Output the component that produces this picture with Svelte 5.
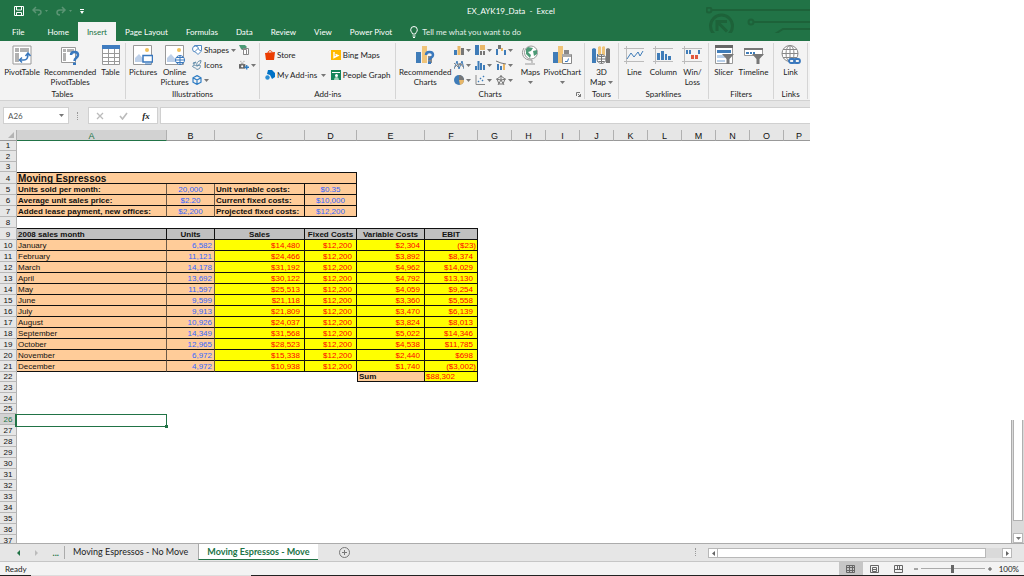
<script lang="ts">
  type Cell = { v?: string; c?: string; span?: number };
  type Row = { n: number; h: number; cells: Cell[] };

  const letters = "ABCDEFGHIJKLMNOP".split("");
  const colWidths = [17, 150, 48, 90, 52, 68, 53, 34, 34, 34, 34, 34, 34, 34, 34, 34, 26];

  const months = [
    ["January", "6,582", "$14,480", "$12,200", "$2,304", "($23)"],
    ["February", "11,121", "$24,466", "$12,200", "$3,892", "$8,374"],
    ["March", "14,178", "$31,192", "$12,200", "$4,962", "$14,029"],
    ["April", "13,692", "$30,122", "$12,200", "$4,792", "$13,130"],
    ["May", "11,597", "$25,513", "$12,200", "$4,059", "$9,254"],
    ["June", "9,599", "$21,118", "$12,200", "$3,360", "$5,558"],
    ["July", "9,913", "$21,809", "$12,200", "$3,470", "$6,139"],
    ["August", "10,926", "$24,037", "$12,200", "$3,824", "$8,013"],
    ["September", "14,349", "$31,568", "$12,200", "$5,022", "$14,346"],
    ["October", "12,965", "$28,523", "$12,200", "$4,538", "$11,785"],
    ["November", "6,972", "$15,338", "$12,200", "$2,440", "$698"],
    ["December", "4,972", "$10,938", "$12,200", "$1,740", "($3,002)"],
  ];

  const inputs = [
    ["Units sold per month:", "20,000", "Unit variable costs:", "$0.35"],
    ["Average unit sales price:", "$2.20", "Current fixed costs:", "$10,000"],
    ["Added lease payment, new offices:", "$2,200", "Projected fixed costs:", "$12,200"],
  ];

  // rows that are a pixel shorter or taller than the default 11
  const heights: Record<number, number> = { 1: 10, 3: 10, 4: 12, 9: 12, 22: 10, 25: 10 };

  const cellsFor = (n: number): Cell[] => {
    if (n === 4) return [{ v: "Moving Espressos", c: "peach heading top", span: 4 }];
    if (n >= 5 && n <= 7) {
      const [a, b, c, d] = inputs[n - 5];
      return [
        { v: a, c: "peach bold soft" },
        { v: b, c: "peach blue center soft" },
        { v: c, c: "peach bold" },
        { v: d, c: "peach blue center" },
      ];
    }
    if (n === 9) {
      return ["2008 sales month", "Units", "Sales", "Fixed Costs", "Variable Costs", "EBIT"].map(
        (v, i) => ({ v, c: "grey bold top" + (i ? " center" : "") })
      );
    }
    if (n >= 10 && n <= 21) {
      return months[n - 10].map((v, i) => {
        if (i === 0) return { v, c: "peach soft" };
        if (i === 1) return { v, c: "peach blue right soft" };
        return { v, c: "yellow money" + (v.startsWith("(") ? " neg" : "") };
      });
    }
    if (n === 22) {
      return [{ span: 4 }, { v: "Sum", c: "peach bold left-edge" }, { v: "$88,302", c: "yellow" }];
    }
    if (n === 26) return [{ c: "selected" }];
    return [];
  };

  const rows: Row[] = Array.from({ length: 37 }, (_, i) => ({
    n: i + 1,
    h: heights[i + 1] ?? 11,
    cells: cellsFor(i + 1),
  }));

  const tabs = ["File", "Home", "Insert", "Page Layout", "Formulas", "Data", "Review", "View", "Power Pivot"];
  const miniCharts = ["column", "tree", "waterfall", "stock", "histogram", "combo", "pie", "scatter", "radar"];

  let zoom = 50;
</script>

{#snippet caret()}
  <svg class="caret" viewBox="0 0 5 3"><path d="M0 0h5L2.500 3z" fill="#777" /></svg>
{/snippet}

{#snippet photo()}
  <path d="M.5.5h18v19H.5z" fill="#fff" stroke="#999" />
  <path d="M2 17v-4l4-4 7 8z" fill="#bdd0e9" />
  <circle cx="14" cy="5" r="2" fill="#f0c05a" />
{/snippet}

<div class="app">
  <header>
    <div class="titlebar">
      <div class="quick">
        <button aria-label="Save">
          <svg width="10" height="10" viewBox="0 0 10 10"><path d="M.5.5h9v9h-9zM2.500.5v3.500h5V.5M2.500 9.500V6.500h5v3" fill="none" stroke="#fff" /></svg>
        </button>
        <button aria-label="Undo">
          <svg width="16" height="10" viewBox="0 0 16 10"><path d="M4 1L1 4l3 3M1 4h5c4 0 4 4 0 5" fill="none" stroke="#5b9574" stroke-width="1.500" /><path d="M13 4h3l-1.500 2z" fill="#5b9574" /></svg>
        </button>
        <button aria-label="Redo">
          <svg width="16" height="10" viewBox="0 0 16 10"><path d="M6 1l3 3-3 3M9 4H4C0 4 0 9 4 9" fill="none" stroke="#5b9574" stroke-width="1.500" /><path d="M13 4h3l-1.500 2z" fill="#5b9574" /></svg>
        </button>
        <button aria-label="Customize Quick Access Toolbar">
          <svg width="4" height="5" viewBox="0 0 4 5"><path d="M0 .5h4" stroke="#fff" /><path d="M0 2h4L2 5z" fill="#fff" /></svg>
        </button>
      </div>
      <h1>EX_AYK19_Data&nbsp; - &nbsp;Excel</h1>
      <div class="rest"></div>
    </div>
    <nav>
      {#each tabs as tab}
        <button class="tab" class:file={tab === "File"} class:active={tab === "Insert"}>{tab}</button>
      {/each}
      <button class="tab tell">
        <svg width="8" height="12" viewBox="0 0 8 12"><path d="M2.500 8C2.500 6.500.7 6 .7 3.800a3.300 3.300 0 0 1 6.600 0C7.300 6 5.500 6.500 5.500 8zM2.500 10h3M3 11.500h2" fill="none" stroke="#fff" /></svg>
        Tell me what you want to do
      </button>
    </nav>
    <svg class="circuit" width="104" height="26" viewBox="0 0 104 26" fill="none" stroke="#1d6239" stroke-width="2">
      <circle cx="3" cy="3" r="2.500" /><path d="M6 3h98" />
      <circle cx="45" cy="15" r="2.500" /><path d="M48 15h56" />
      <circle cx="15.500" cy="19" r="11" stroke-width="3" />
      <path d="M11 24V14.500h10M11 14.500l10 10" stroke-width="3" />
      <path d="M69 27l8-5h27" />
    </svg>
  </header>

  <section class="ribbon">
    <div class="group tables">
      <div class="tools">
        <button class="big">
          <svg viewBox="0 0 20 20"><path d="M1 1h18v18H1z" fill="#fff" stroke="#999" /><path d="M3 3h4v4H3zM8 3h9v4H8zM3 8h4v9H3z" fill="#b1b1b1" /><path d="M8 15h4c3 0 4-2 4-6M10 12.500L7.500 15l2.500 2.500M13.500 11L16 8l2.500 3" fill="none" stroke="#3a78bd" stroke-width="1.500" /></svg>
          PivotTable
        </button>
        <button class="big">
          <svg viewBox="0 0 20 20"><path d="M1.500 2.500h14v15h-14z" fill="#fff" stroke="#999" /><path d="M3 4h3v3H3zM7 4h7v3H7zM3 8h3v8H3z" fill="#b1b1b1" /><path d="M11 10c0-4 7-4 7 0 0 3-3.500 2.500-3.500 6" fill="none" stroke="#3a78bd" stroke-width="2.500" /><path d="M13 17.500h3V20h-3z" fill="#3a78bd" /></svg>
          Recommended<br />PivotTables
        </button>
        <button class="big">
          <svg viewBox="0 0 20 20"><path d="M1 1h18v18H1z" fill="#fff" /><path d="M1 0h18v4H1z" fill="#3f7cc0" /><path d="M1.500 4v15.500h17V4M1 8.500h18M1 12.500h18M1 16.500h18M7.500 4v15M13.500 4v15" fill="none" stroke="#999" /></svg>
          Table
        </button>
      </div>
      <span class="name">Tables</span>
    </div>

    <div class="group illus">
      <div class="tools">
        <button class="big">
          <svg viewBox="0 0 20 20">{@render photo()}<path d="M10 10.500h9.500v6.500H10z" fill="#fff" stroke="#3a78bd" stroke-width="1.500" /><path d="M12 19h6" stroke="#3a78bd" /></svg>
          Pictures
        </button>
        <button class="big">
          <svg viewBox="0 0 20 20">{@render photo()}<g fill="none" stroke="#3a78bd"><circle cx="15" cy="15" r="4.500" fill="#fff" /><path d="M10.500 15h9M15 10.500v9M11.500 12.500h7M11.500 17.500h7" /></g></svg>
          Online<br />Pictures
        </button>
        <div class="stack three">
          <button class="small">
            <svg viewBox="0 0 10 10" fill="#fff" stroke="#5288c1"><path d="M2.500.5h7v5h-7z" /><circle cx="3.500" cy="4" r="3" /><path d="M6 3.500L9 6.500 6 9.500 3 6.500z" /></svg>
            Shapes{@render caret()}
          </button>
          <button class="small">
            <svg viewBox="0 0 10 10" fill="none" stroke="#6790ad"><path d="M5 9.500C8 9 9 7 8 5L5 6c-2-1-4-1-4.500 0C1 8 3 7 5 9.500M5 6c-1-3 1-5 4-5.500 0 2-1 4-4 5.500M2 4.500L1 3l3-1z" /></svg>
            Icons
          </button>
          <button class="small" aria-label="3D Models">
            <svg viewBox="0 0 10 10" fill="none" stroke="#2f7dc4" stroke-width="1.200"><path d="M5 .6l4 2.200v4.400L5 9.400 1 7.200V2.800zM1 2.800l4 2.200 4-2.200M5 5v4.400" /></svg>
            {@render caret()}
          </button>
        </div>
        <div class="stack three">
          <button class="small" aria-label="SmartArt">
            <svg viewBox="0 0 10 10"><path d="M0 0h6l2 2-2 2H2z" fill="#4c9a76" /><path d="M2.500 4.500h5v5h-3M4.500 3.500h5v6h-5z" fill="#fff" stroke="#888" /></svg>
          </button>
          <button class="small" aria-label="Screenshot">
            <svg viewBox="0 0 11 10"><path d="M0 4h7v5H0z" fill="#666" /><circle cx="3.500" cy="6.500" r="1.200" fill="#fff" /><path d="M2 3h3M1.500 1h1M5 1h1" stroke="#888" /><path d="M8.500 5v5M6 7.500h5" stroke="#2f7dc4" stroke-width="1.500" /></svg>
            {@render caret()}
          </button>
        </div>
      </div>
      <span class="name">Illustrations</span>
    </div>

    <div class="group addins">
      <div class="tools">
        <div class="stack two">
          <button class="small">
            <svg viewBox="0 0 10 10"><path d="M0 3l10-1-1 8H1z" fill="#eb3c00" /><path d="M3 3c0-3 4-3 4-.5" fill="none" stroke="#eb3c00" /></svg>
            Store
          </button>
          <button class="small">
            <svg viewBox="0 0 10 10"><path d="M3 0h4l3 3v4L7 9 5 5 2 4z" fill="#0072c6" /><circle cx="2.500" cy="7.500" r="2.200" fill="#2a8dd4" /></svg>
            My Add-ins <span></span>{@render caret()}
          </button>
        </div>
        <div class="stack two">
          <button class="small">
            <svg viewBox="0 0 10 10"><path d="M0 0h10v10H0z" fill="#ffb900" /><path d="M3 2v5.500l4-2-2.500-1.200" fill="none" stroke="#fff" stroke-width="1.400" /></svg>
            Bing Maps
          </button>
          <button class="small">
            <svg viewBox="0 0 10 10"><path d="M0 0h10v10H0z" fill="#13855a" /><path d="M1 2.500h8" stroke="#fff" /><circle cx="5.500" cy="5.500" r="1.500" fill="#fff" /><path d="M3 10c0-4 5-4 5 0z" fill="#9fd4bb" /></svg>
            People Graph
          </button>
        </div>
      </div>
      <span class="name">Add-ins</span>
    </div>

    <div class="group charts">
      <div class="tools">
        <button class="big">
          <svg viewBox="0 0 20 20"><path d="M1 7h5v11H1z" fill="#3f7cb8" /><path d="M7 1h5v17H7z" fill="#f0c479" /><path d="M13 11h4v7h-4z" fill="#888" /><path d="M11 10c0-4 7-4 7 0 0 3-3.500 2.500-3.500 5" fill="none" stroke="#3a78bd" stroke-width="2.500" /><path d="M13 16.500h3V19h-3z" fill="#3a78bd" /></svg>
          Recommended<br />Charts
        </button>
        <div class="minis">
          {#each miniCharts as kind}
            <button class="small" aria-label={kind}>
              <svg viewBox="0 0 10 10">
                {#if kind === "column"}
                  <path d="M0 5h3v5H0z" fill="#3f7cb8" /><path d="M3.500 1h3v9h-3z" fill="#e8b768" /><path d="M7 3h3v7H7z" fill="#777" />
                {:else if kind === "tree"}
                  <path d="M0 0h4v10H0z" fill="#3f7cb8" /><path d="M5 0h5v5H5z" fill="#e8b768" /><path d="M5 6h2v4H5zM8 6h2v4H8z" fill="#777" />
                {:else if kind === "waterfall"}
                  <path d="M0 4h2v6H0z" fill="#3f7cb8" /><path d="M2 0h3v4H2z" fill="#777" /><path d="M5 3h2v3H5z" fill="#e8b768" /><path d="M8 5h2v5H8z" fill="#3f7cb8" />
                {:else if kind === "stock"}
                  <path d="M0 9l3-8 2 8 3-8 2 8" fill="none" stroke="#3f7cb8" /><path d="M0 3l4 4 2-4 4 5M0 8l4-4 5 1" fill="none" stroke="#888" />
                {:else if kind === "histogram"}
                  <path d="M0 6h2v4H0zM2.500 1h2v9h-2zM5 3h2v7H5zM8 5h2v5H8z" fill="#3f7cb8" />
                {:else if kind === "combo"}
                  <path d="M1 4h2v6H1zM4 6h2v4H4z" fill="#3f7cb8" /><path d="M7 4h2v6H7z" fill="#e8b768" /><path d="M0 1l5 2 5 1" fill="none" stroke="#777" />
                {:else if kind === "pie"}
                  <circle cx="5" cy="5" r="5" fill="#3f7cb8" /><path d="M5 5V0a5 5 0 0 1 5 5z" fill="#777" /><path d="M5 5h5a5 5 0 0 1-4 4.900z" fill="#e8b768" />
                {:else if kind === "scatter"}
                  <path d="M1 0v9.500h9" fill="none" stroke="#888" /><path d="M3 6h1v1H3zM5 3h1v1H5zM7 5h1v1H7zM8 1h1v1H8z" fill="#3f7cb8" stroke="#3f7cb8" stroke-width=".5" />
                {:else}
                  <path d="M5 0v5L0 4M5 5l5-1M5 5l-3 5M5 5l3 5M5 1l4 3-2 5H3L1 4z" fill="none" stroke="#777" />
                {/if}
              </svg>
              {@render caret()}
            </button>
          {/each}
        </div>
        <button class="big">
          <svg viewBox="0 0 20 20"><path d="M4 3C0 9 4 16 12 15M12 15v3M5 19h10" fill="none" stroke="#999" /><circle cx="11" cy="7.500" r="6.500" fill="#fff" stroke="#999" /><path d="M8 2l5 1-2 3-3 1 3 3-1 3-4-4V4zM13 6l4-1v4l-3 2z" fill="#4c9a76" /></svg>
          Maps<br />{@render caret()}
        </button>
        <button class="big">
          <svg viewBox="0 0 20 20"><path d="M1 7h5v11H1z" fill="#3f7cb8" /><path d="M6 1h5v17H6z" fill="#f0c479" /><path d="M12 5h5v6h-5z" fill="#888" /><path d="M10.500 9.500h9v9h-9z" fill="#fff" stroke="#888" /><path d="M10 9h9v3h-9z" fill="#aaa" /><path d="M13 16.500h2.500l1-3" fill="none" stroke="#3a78bd" /></svg>
          PivotChart<br />{@render caret()}
        </button>
      </div>
      <span class="name">Charts</span>
      <button class="launcher" aria-label="Chart options"><svg width="5" height="5" viewBox="0 0 5 5"><path d="M.5 4V.5H4M2 2l2.500 2.500M4.500 2v2.500H2" fill="none" stroke="#777" /></svg></button>
    </div>

    <div class="group tours">
      <div class="tools">
        <button class="big">
          <svg viewBox="0 0 20 20"><path d="M1 4l2-1 2 1v14H1zM6 9h2v8H6z" fill="#3f7cb8" /><path d="M7 2l2-1 1 1v8H7zM11 2l2-1 1 1v8h-3z" fill="#f0c479" /><path d="M15 4l2-1 2 1v14h-4z" fill="#777" /><g fill="none" stroke="#777"><circle cx="10.500" cy="14" r="4.500" fill="#fff" /><path d="M6 14h9M10.500 9.500v9M7.500 11.500h6M7.500 16.500h6" /></g></svg>
          3D<br />Map {@render caret()}
        </button>
      </div>
      <span class="name">Tours</span>
    </div>

    <div class="group spark">
      <div class="tools">
        <button class="big">
          <svg viewBox="0 0 20 20"><path d="M0 3.500h20M0 16.500h20M2.500 1v18" stroke="#bbb" /><path d="M3 14l4-6 3 4 4-5 2 4 3-5" fill="none" stroke="#3f7cb8" /></svg>
          Line
        </button>
        <button class="big">
          <svg viewBox="0 0 20 20"><path d="M0 3.500h20M0 16.500h20M2.500 1v18" stroke="#bbb" /><path d="M4 8h3v7H4zM8 6h3v9H8zM12 9h2v6h-2zM15 11h3v4h-3z" fill="#3f7cb8" /></svg>
          Column
        </button>
        <button class="big">
          <svg viewBox="0 0 20 20"><path d="M0 3.500h20M0 16.500h20M2.500 1v18" stroke="#bbb" /><path d="M4 5h2v4H4zM7 5h2v4H7zM16 5h2v4h-2z" fill="#3f7cb8" /><path d="M9 10h3v4H9zM13 10h3v4h-3z" fill="#e0573e" /></svg>
          Win/<br />Loss
        </button>
      </div>
      <span class="name">Sparklines</span>
    </div>

    <div class="group filters">
      <div class="tools">
        <button class="big">
          <svg viewBox="0 0 20 20"><path d="M1.500.5h17v18h-17z" fill="#fff" stroke="#999" /><path d="M1 0h18v3H1z" fill="#666" /><path d="M3 5h14v3H3z" fill="#3f7cb8" /><path d="M3 10h8v3H3zM3 15h8v2H3z" fill="#b8cfe8" /><path d="M8 9h12l-4.500 5v5h-3v-5z" fill="#777" /></svg>
          Slicer
        </button>
        <button class="big">
          <svg viewBox="0 0 20 20"><path d="M.5 3.500h18v7H.5z" fill="#fff" stroke="#999" /><path d="M0 3h19v2H0z" fill="#777" /><path d="M2 7h3v2H2zM6 7h2v2H6zM9 7h2v2H9z" fill="#3f7cb8" /><path d="M8 9h12l-4.500 5v5h-3v-5z" fill="#777" /></svg>
          Timeline
        </button>
      </div>
      <span class="name">Filters</span>
    </div>

    <div class="group links">
      <div class="tools">
        <button class="big">
          <svg viewBox="0 0 20 20" fill="none"><g stroke="#888"><circle cx="9" cy="8.500" r="8" fill="#fff" /><ellipse cx="9" cy="8.500" rx="4" ry="8" /><path d="M1 8.500h16M9 .5v16M2 4.500h14M2 12.500h14" /></g><g stroke="#3a78bd" stroke-width="1.800"><rect x="8" y="14" width="6" height="4" rx="2" fill="#f3f3f3" /><rect x="13" y="14" width="6" height="4" rx="2" /></g></svg>
          Link
        </button>
      </div>
      <span class="name">Links</span>
    </div>
  </section>

  <div class="formula-bar">
    <div class="name-box">
      <input value="A26" aria-label="Name box" />
      <button aria-label="Names">{@render caret()}</button>
    </div>
    <span class="grip"></span>
    <div class="fx">
      <button aria-label="Cancel"><svg width="8" height="8" viewBox="0 0 8 8"><path d="M1 1l6 6M7 1L1 7" stroke="#bbb" stroke-width="1.300" /></svg></button>
      <button aria-label="Enter"><svg width="9" height="8" viewBox="0 0 9 8"><path d="M1 4l2.500 3L8 1" fill="none" stroke="#bbb" stroke-width="1.600" /></svg></button>
      <button class="fn">fx</button>
    </div>
    <input class="formula" aria-label="Formula" />
  </div>

  <main>
    <div class="sheet">
      <table>
        <colgroup>
          {#each colWidths as w}<col style="width: {w}px" />{/each}
        </colgroup>
        <thead>
          <tr>
            <th class="corner"><svg width="6" height="6" viewBox="0 0 6 6"><path d="M6 0v6H0z" fill="#b4b4b4" /></svg></th>
            {#each letters as letter}
              <th class:current={letter === "A"}>{letter}</th>
            {/each}
          </tr>
        </thead>
        <tbody>
          {#each rows as row}
            <tr style="height: {row.h}px">
              <th class:current={row.n === 26}>{row.n}</th>
              {#each row.cells as cell}
                <td class={cell.c ?? ""} colspan={cell.span ?? 1}>{cell.v ?? ""}</td>
              {/each}
            </tr>
          {/each}
        </tbody>
      </table>
    </div>
    <div class="vscroll">
      <div class="thumb"></div>
      <button aria-label="Scroll down">{@render caret()}</button>
    </div>
  </main>

  <div class="sheet-tabs">
    <div class="steps">
      <button aria-label="Previous sheet"><svg width="3" height="6" viewBox="0 0 3 6"><path d="M3 0v6L0 3z" fill="#217346" /></svg></button>
      <button aria-label="Next sheet"><svg width="3" height="6" viewBox="0 0 3 6"><path d="M0 0v6l3-3z" fill="#bbb" /></svg></button>
      <button class="more">...</button>
    </div>
    <button class="sheet-tab">Moving Espressos - No Move</button>
    <button class="sheet-tab active">Moving Espressos - Move</button>
    <button class="add" aria-label="New sheet"><svg width="11" height="11" viewBox="0 0 11 11"><circle cx="5.500" cy="5.500" r="5" fill="none" stroke="#777" /><path d="M5.500 3v5M3 5.500h5" stroke="#777" /></svg></button>
    <span class="grip"></span>
    <div class="hscroll">
      <button aria-label="Scroll left"><svg width="3" height="5" viewBox="0 0 3 5"><path d="M3 0v5L0 2.500z" fill="#666" /></svg></button>
      <div class="thumb"></div>
      <button aria-label="Scroll right"><svg width="3" height="5" viewBox="0 0 3 5"><path d="M0 0v5l3-2.500z" fill="#666" /></svg></button>
    </div>
  </div>

  <footer>
    <span class="ready">Ready</span>
    <button class="view on" aria-label="Normal"><svg width="9" height="8" viewBox="0 0 9 8"><path d="M.5.5h8v7h-8zM.5 2.500h8M.5 5.500h8M3.500.5v7M6.500.5v7" fill="none" stroke="#666" /></svg></button>
    <button class="view" aria-label="Page Layout"><svg width="9" height="8" viewBox="0 0 9 8"><path d="M.5.5h8v7h-8zM2.500 2.500h4v4h-4zM3 4.500h3" fill="none" stroke="#666" /></svg></button>
    <button class="view" aria-label="Page Break Preview"><svg width="9" height="8" viewBox="0 0 9 8"><path d="M.5.5h8v7h-8zM.5 4.500h8M3.500.5v4M5.500.5v4" fill="none" stroke="#666" /></svg></button>
    <button class="step" aria-label="Zoom out"><svg width="4" height="4" viewBox="0 0 4 4"><path d="M0 2h4" stroke="#555" /></svg></button>
    <input type="range" bind:value={zoom} aria-label="Zoom" />
    <button class="step" aria-label="Zoom in"><svg width="4" height="4" viewBox="0 0 4 4"><path d="M0 2h4M2 0v4" stroke="#555" /></svg></button>
    <button class="percent">100%</button>
  </footer>
  <div class="edge"></div>
</div>

<style>
  :global(body) {
    margin: 0;
    background: #fff;
  }

  .app {
    height: 100vh;
    display: flex;
    flex-direction: column;
    overflow: hidden;
    font: 8px/10px Lato, "Open Sans", sans-serif;
    color: #222;
  }

  button,
  input {
    margin: 0;
    padding: 0;
    border: 0;
    background: none;
    font: inherit;
    color: inherit;
  }

  button {
    display: flex;
    align-items: center;
    justify-content: center;
    white-space: nowrap;
  }

  svg {
    display: block;
    flex: none;
  }

  .caret {
    display: inline-block;
    width: 5px;
    height: 3px;
    vertical-align: middle;
  }

  header,
  .ribbon,
  .formula-bar {
    box-sizing: border-box;
    width: 79.1%;
    flex: none;
  }

  header {
    position: relative;
    background: #217346;
    color: #fff;
  }

  .titlebar {
    height: 22px;
    display: flex;
    align-items: center;
  }

  .quick {
    flex: 458;
    box-sizing: border-box;
    padding-left: 14px;
    display: flex;
    align-items: center;
    gap: 8px;
  }

  h1 {
    margin: 0;
    font-size: 8px;
    font-weight: 400;
    white-space: nowrap;
  }

  .rest {
    flex: 258;
  }

  nav {
    display: flex;
    height: 19px;
  }

  .tab {
    padding: 0 9px;
  }

  .tab.file {
    padding: 0 14px 0 12px;
  }

  .tab.active {
    background: #f3f3f3;
    color: #217346;
  }

  .tell {
    gap: 4px;
    color: #e4efe8;
  }

  .circuit {
    position: absolute;
    right: 0;
    top: 7px;
  }

  .ribbon {
    display: flex;
    height: 60px;
    padding: 2px 2px 1px 0;
    background: #f3f3f3;
    border-bottom: 1px solid #d2d2d2;
  }

  .group {
    position: relative;
    box-sizing: border-box;
    min-width: 0;
    display: flex;
    flex-direction: column;
    border-right: 1px solid #d5d5d5;
  }

  .tables { flex: 126 0 0; }
  .illus { flex: 135 0 0; }
  .addins { flex: 136 0 0; }
  .charts { flex: 190 0 0; }
  .tours { flex: 33 0 0; }
  .spark { flex: 90 0 0; }
  .filters { flex: 65 0 0; }
  .links { flex: 33 0 0; }

  .tools {
    flex: 1;
    display: flex;
    align-items: flex-start;
    justify-content: space-evenly;
    padding-top: 2px;
  }

  .name {
    text-align: center;
  }

  .big {
    display: block;
    text-align: center;
  }

  .big > svg:first-child {
    width: 20px;
    height: 20px;
    margin: 0 auto 2px;
  }

  .stack {
    display: flex;
    flex-direction: column;
    align-items: flex-start;
  }

  .three {
    gap: 5px;
  }

  .two {
    gap: 10px;
    padding-top: 5px;
  }

  .small {
    height: 10px;
    gap: 2px;
  }

  .small > svg:first-child {
    width: 10px;
    height: 10px;
  }

  .minis {
    display: grid;
    grid-template-columns: repeat(3, 21px);
    gap: 5px 0;
    justify-items: start;
  }

  .launcher {
    position: absolute;
    right: 3px;
    bottom: 2px;
  }

  .formula-bar {
    display: flex;
    height: 29px;
    padding: 6px 0;
    background: #e6e6e6;
  }

  .name-box {
    display: flex;
    box-sizing: border-box;
    width: 66px;
    margin-left: 3px;
    padding: 0 4px;
    border: 1px solid #d0d0d0;
    background: #fff;
    color: #555;
  }

  .name-box input {
    flex: 1;
    min-width: 0;
  }

  .grip {
    width: 2px;
    height: 8px;
    margin: auto 8px;
    border-left: 1px dotted #999;
  }

  .fx {
    display: flex;
    align-items: center;
    justify-content: space-around;
    box-sizing: border-box;
    width: 70px;
    border: 1px solid #d0d0d0;
    background: #fff;
  }

  .fn {
    font: italic bold 9px "Liberation Serif", serif;
  }

  .formula {
    flex: 1;
    margin-left: 2px;
    border: solid #d0d0d0;
    border-width: 1px 0 1px 1px;
    background: #fff;
  }

  main {
    flex: 1;
    min-height: 0;
    display: flex;
    overflow: hidden;
  }

  .sheet {
    flex: 1;
    overflow: hidden;
  }

  table {
    table-layout: fixed;
    width: 0;
    border-collapse: separate;
    border-spacing: 0;
    font: 8px/8px "Liberation Sans", Arial, sans-serif;
    color: #111;
  }

  th,
  td {
    box-sizing: border-box;
    padding: 0;
    overflow: hidden;
    white-space: nowrap;
    text-align: left;
    vertical-align: bottom;
  }

  td {
    padding: 0 1px;
  }

  th {
    font-weight: 400;
    text-align: center;
    background: #e6e6e6;
    border-right: 1px solid #b0b0b0;
    border-bottom: 1px solid #b8b8b8;
  }

  thead th {
    height: 11px;
    font-size: 9px;
    border-bottom-color: #999;
  }

  thead th:last-child {
    border-right: 0;
    padding-left: 4px;
  }

  .corner svg {
    margin: 0 2px 2px auto;
  }

  th.current {
    background: #d2d2d2;
    color: #217346;
  }

  thead th.current {
    border-bottom: 1px solid #217346;
  }

  .peach,
  .grey,
  .yellow {
    border-right: 1px solid #111;
    border-bottom: 1px solid #111;
  }

  .peach { background: #fc9; }
  .grey { background: #c0c0c0; }
  .yellow { background: #ff0; color: #f00; }
  .soft { border-right-color: #6b5a48; }
  .top { border-top: 1px solid #111; }
  .bold { font-weight: 700; }
  .blue { color: #36f; }
  .center { text-align: center; }
  .right { text-align: right; padding-right: 2px; }
  .left-edge { border-left: 1px solid #111; }

  .heading {
    font-size: 10px;
    font-weight: 700;
  }

  .money {
    text-align: right;
    padding-right: 4px;
  }

  .neg {
    padding-right: 1px;
  }

  .selected {
    position: relative;
    overflow: visible;
  }

  .selected::before {
    content: "";
    position: absolute;
    inset: 0 0 -2px -2px;
    border: solid #217346;
    border-width: 1px 1px 1px 2px;
  }

  .selected::after {
    content: "";
    position: absolute;
    right: -1px;
    bottom: -3px;
    width: 3px;
    height: 3px;
    background: #217346;
  }

  .vscroll {
    align-self: flex-end;
    box-sizing: border-box;
    width: 13px;
    height: 123px;
    padding: 0 1px;
    display: flex;
    flex-direction: column;
    background: #dadada;
    border-left: 1px solid #ababab;
  }

  .vscroll .thumb {
    flex: 1;
    margin-bottom: 12px;
    background: #fff;
    border: solid #b0b0b0;
    border-width: 0 1px 1px;
  }

  .vscroll button,
  .hscroll button {
    box-sizing: border-box;
    width: 10px;
    height: 10px;
    background: #fff;
    border: 1px solid #b8b8b8;
  }

  .sheet-tabs {
    box-sizing: border-box;
    height: 19px;
    flex: none;
    display: flex;
    align-items: flex-start;
    background: #e6e6e6;
    border-top: 1px solid #ababab;
    border-bottom: 1px solid #c6c6c6;
  }

  .steps {
    box-sizing: border-box;
    width: 65px;
    height: 13px;
    margin-top: 2px;
    padding: 0 5px 0 17px;
    display: flex;
    justify-content: space-between;
    border-right: 1px solid #ababab;
  }

  .more {
    color: #217346;
    font-size: 9px;
    font-weight: 700;
  }

  .sheet-tab {
    height: 16px;
    padding: 0 8px;
    font-size: 9px;
  }

  .sheet-tab.active {
    margin-left: 2px;
    background: #fff;
    color: #217346;
    font-weight: 700;
    border-left: 1px solid #ababab;
    border-bottom: 1px solid #217346;
    box-sizing: border-box;
  }

  .add {
    height: 16px;
    margin-left: 21px;
  }

  .sheet-tabs .grip {
    margin: 4px 10px 0 auto;
  }

  .hscroll {
    display: flex;
    width: 304px;
    height: 10px;
    margin: 4px 12px 0 0;
    background: #dadada;
  }

  .hscroll .thumb {
    flex: 1;
    margin-right: 16px;
    background: #fff;
    border: solid #b8b8b8;
    border-width: 1px 1px 1px 0;
  }

  footer {
    flex: none;
    height: 13px;
    padding-right: 5px;
    display: flex;
    align-items: center;
    background: #f3f3f3;
  }

  .ready {
    flex: 1;
    padding-left: 5px;
  }

  .view {
    width: 24px;
    height: 13px;
  }

  .view.on {
    background: #c6c6c6;
  }

  .step {
    margin: 0 3px;
  }

  footer input {
    appearance: none;
    width: 64px;
    height: 1px;
    background: #aaa;
  }

  footer input::-webkit-slider-thumb {
    appearance: none;
    width: 3px;
    height: 8px;
    background: #666;
  }

  .percent {
    margin-left: 4px;
  }

  .edge {
    flex: none;
    height: 1px;
    background: linear-gradient(90deg, #222 3%, #ddd 3% 24.5%, #222 24.5%);
  }
</style>
